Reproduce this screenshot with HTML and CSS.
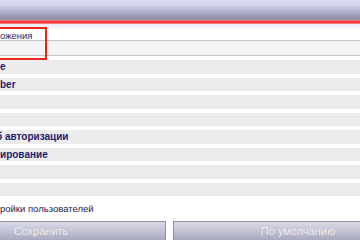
FILE: index.html
```html
<!DOCTYPE html>
<html lang="ru">
<head>
  <meta charset="UTF-8">
  <meta name="viewport" content="width=device-width, initial-scale=1.0">
  <title>Настройки</title>
  <link rel="stylesheet" href="styles.css">
</head>
<body>
  <div class="topbar"></div>
  <div class="redline"></div>

  <div class="settings">
    <div class="section-title">ожения</div>
    <div class="field field-main"></div>

    <div class="rows">
      <div class="row"><span class="label">e</span></div>
      <div class="row"><span class="label">ber</span></div>
      <div class="row"></div>
      <div class="row"></div>
      <div class="row"><span class="label cut">б авторизации</span></div>
      <div class="row"><span class="label">ирование</span></div>
      <div class="row"></div>
      <div class="row"></div>
    </div>

    <p class="note">ройки пользователей</p>

    <div class="actions">
      <button class="btn">Сохранить</button>
      <button class="btn">По умолчанию</button>
    </div>
  </div>

  <div class="highlight"></div>
</body>
</html>
```

FILE: styles.css
```css
html,
body {
  margin: 0;
  padding: 0;
  width: 360px;
  height: 240px;
  overflow: hidden;
  background-color: #ffffff;
}

body {
  position: relative;
  font-family: "Liberation Sans", Arial, sans-serif;
  font-size: 10px;
  color: #1c1c4c;
}

.topbar {
  height: 20px;
  background: linear-gradient(#dedef2 0%, #d2d2ea 25%, #a4a4c0 70%, #8a8aa6 100%);
}

.redline {
  height: 4px;
  background: linear-gradient(#f59a9a 0%, #ff3a3a 35%, #ff3a3a 70%, #f7a0a8 100%);
}

.section-title {
  box-sizing: border-box;
  height: 17px;
  padding: 6px 0 0 0;
  font-size: 9.5px;
  line-height: 11px;
  color: #2c2c5e;
  background: linear-gradient(#eaeafa 0px, #f4f4fc 3px, #ffffff 6px);
  border-bottom: 1px solid #c6c6c6;
}

.field-main {
  box-sizing: border-box;
  height: 15px;
  background-color: #f5f5f5;
  border-bottom: 1px solid #c6c6c6;
}

.rows {
  margin-top: 4px;
}

.row {
  height: 13.5px;
  margin-bottom: 4px;
  background-color: #ececec;
  line-height: 13.5px;
}

.label {
  display: block;
  font-weight: bold;
  color: #1c1c6e;
}

.label.cut {
  text-indent: -4px;
}

.note {
  margin: 7px 0 0 0;
  font-size: 9.5px;
  line-height: 12px;
  color: #1c1c48;
}

.actions {
  display: flex;
  gap: 7px;
  margin: 6px 0 0 -84px;
  width: 520px;
}

.btn {
  flex: 0 0 250px;
  height: 20px;
  padding: 0;
  border: 1px solid #8e8ea4;
  border-radius: 0;
  background: linear-gradient(#d8d8e6 0%, #c4c4d6 50%, #a8a8c0 100%);
  color: #f4f4f8;
  font-family: "Liberation Sans", Arial, sans-serif;
  font-size: 11px;
  text-shadow: 0 0 1px #9a9ab0;
}

.highlight {
  position: absolute;
  left: -2px;
  top: 27px;
  width: 49px;
  height: 33px;
  box-sizing: border-box;
  border: 2px solid #e8261e;
}
```
